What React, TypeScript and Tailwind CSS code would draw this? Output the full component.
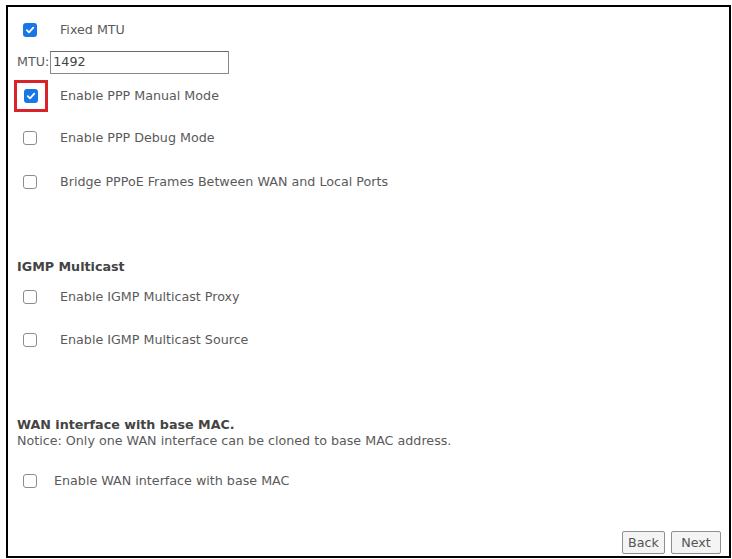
import React from 'react';

const font = { fontFamily: '"DejaVu Sans", Verdana, sans-serif' };

function Box({ checked }: { checked?: boolean }) {
  if (checked) {
    return (
      <span className="flex h-[14px] w-[14px] items-center justify-center rounded-[3px] bg-[#1877e6]">
        <svg width="10" height="10" viewBox="0 0 10 10" fill="none">
          <path d="M1.8 5.2 L4 7.3 L8.3 2.7" stroke="#fff" strokeWidth="1.8" strokeLinecap="round" strokeLinejoin="round" />
        </svg>
      </span>
    );
  }
  return <span className="block h-[14px] w-[14px] rounded-[3px] border-[1.5px] border-[#8c8c8c] bg-white" />;
}

function Row({ label, checked, className = '' }: { label: string; checked?: boolean; className?: string }) {
  return (
    <div className={`flex h-[28px] items-center pl-[15px] ${className}`}>
      <Box checked={checked} />
      <span className="ml-[23px]">{label}</span>
    </div>
  );
}

export default function App() {
  return (
    <div className="h-[559px] w-[732px] bg-white pl-[6px] pt-[5px] text-[12.7px] text-[#5a5a5a]" style={font}>
      <div className="flex h-[553px] w-[725px] flex-col border-2 border-black">
        <Row label="Fixed MTU" checked className="mt-[9px]" />
        <div className="mt-[6px] flex h-[24px] items-center pl-[9px]">
          <span>MTU:</span>
          <div className="ml-px flex h-[23px] w-[179px] items-center border border-[#8a8a8a] border-t-[#6a6a6a] pl-[2px] text-[#444]">1492</div>
        </div>
        <div className="mt-[6px] flex h-[32px] items-center pl-[6px]">
          <div className="flex h-[32px] w-[34px] items-center justify-center border-[3px] border-[#d8232a]">
            <Box checked />
          </div>
          <span className="ml-[12px]">Enable PPP Manual Mode</span>
        </div>
        <Row label="Enable PPP Debug Mode" className="mt-[12px]" />
        <Row label="Bridge PPPoE Frames Between WAN and Local Ports" className="mt-[16px]" />
        <div className="mt-[63px] flex h-[16px] items-center pl-[9px] text-[12.7px] font-bold text-[#444]">IGMP Multicast</div>
        <Row label="Enable IGMP Multicast Proxy" className="mt-[8px]" />
        <Row label="Enable IGMP Multicast Source" className="mt-[15px]" />
        <div className="mt-[63px] flex h-[16px] items-center pl-[9px] text-[12.7px] font-bold text-[#444]">WAN interface with base MAC.</div>
        <div className="flex h-[16px] items-center pl-[9px]">Notice: Only one WAN interface can be cloned to base MAC address.</div>
        <div className="mt-[18px] flex h-[28px] items-center pl-[15px]">
          <Box />
          <span className="ml-[17px]">Enable WAN interface with base MAC</span>
        </div>
        <div className="mt-auto mb-[2px] flex justify-end gap-[6px] pr-[8px]">
          <button type="button" className="h-[23px] w-[43px] rounded-[2px] border border-[#8f8f8f] bg-[#f4f4f4] text-[12.7px] text-[#555]">Back</button>
          <button type="button" className="h-[23px] w-[50px] rounded-[2px] border border-[#8f8f8f] bg-[#f4f4f4] text-[12.7px] text-[#555]">Next</button>
        </div>
      </div>
    </div>
  );
}
